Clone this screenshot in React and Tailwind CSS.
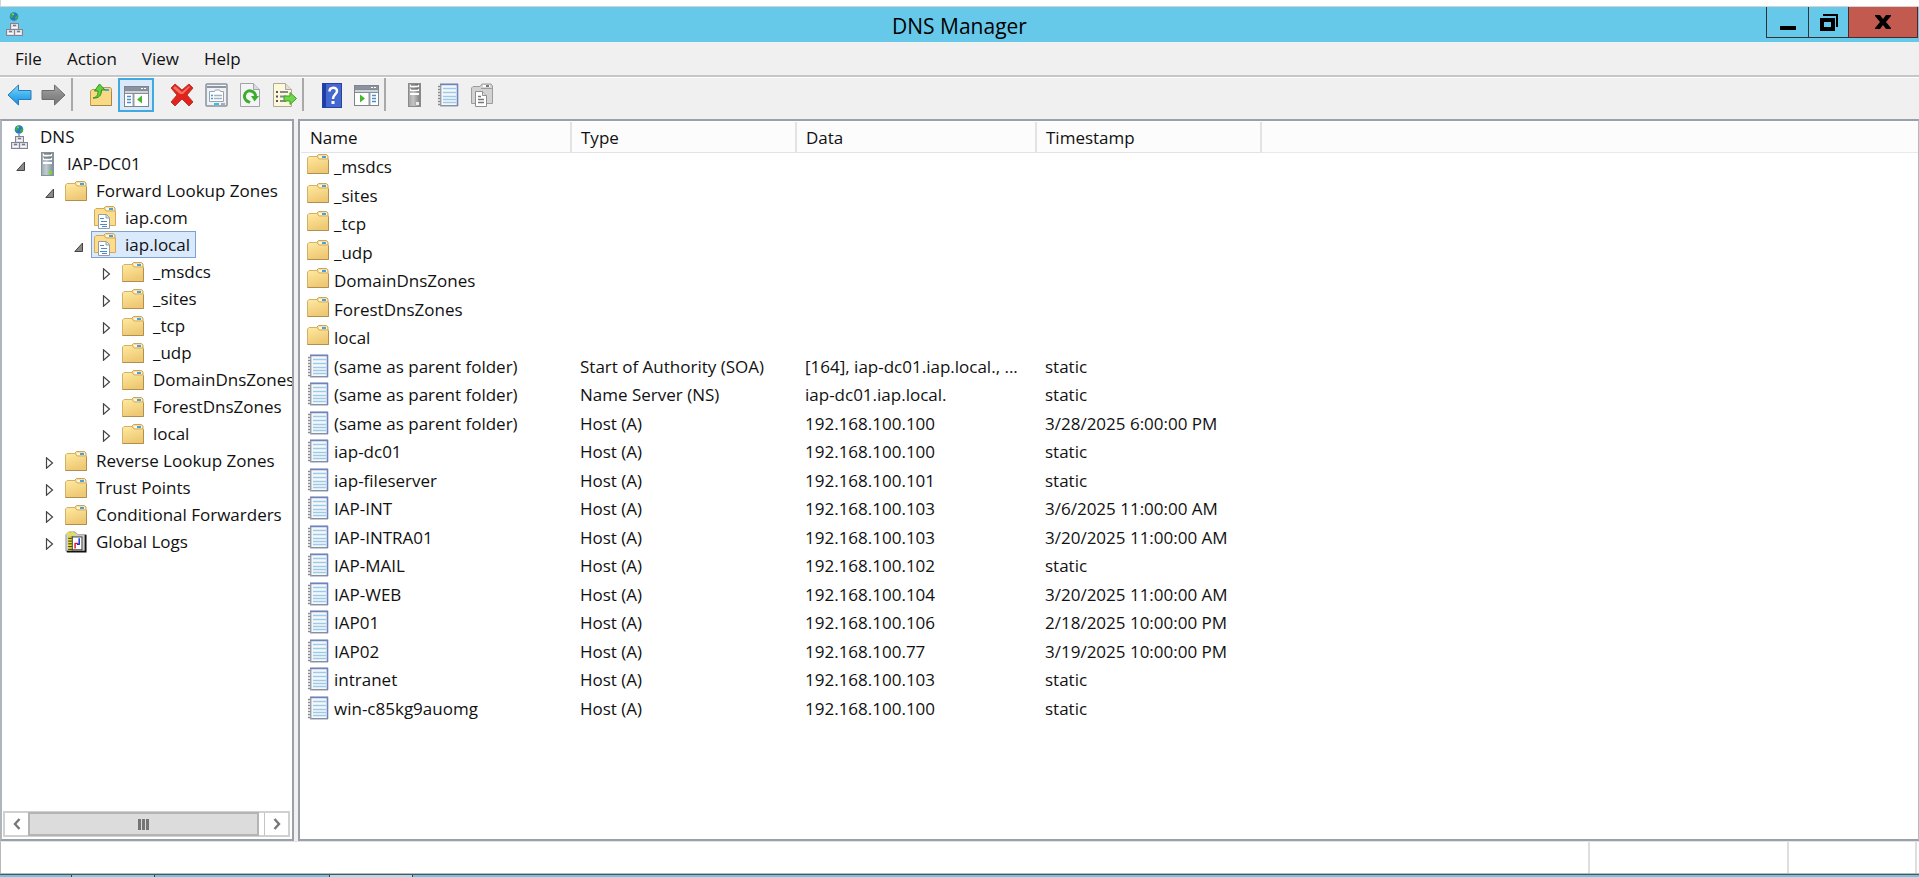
import React from 'react';

function Folder() {
  return (
    <svg width="22" height="20" viewBox="0 0 22 20" aria-hidden="true">
      <defs>
        <linearGradient id="fold" x1="0" y1="0" x2="0.4" y2="1">
          <stop offset="0" stopColor="#ffeaa0" />
          <stop offset="1" stopColor="#eec873" />
        </linearGradient>
      </defs>
      <path d="M10 4.5V2l1.500-1.500H19.500L21 2v4H10z" fill="#f6dfa0" stroke="#c9a55e" />
      <path d="M.5 19.500V4L2 2.500h8L12 5h9.500v14.500z" fill="url(#fold)" stroke="#d3b167" />
      <path d="M.5 19.500H21.500V6" fill="none" stroke="#b08f50" />
      <rect x="12" y="2" width="8" height="2" fill="#fff6d8" />
      <rect x="15" y="2" width="4" height="2" fill="#4d9fdc" />
    </svg>
  );
}

function ZoneFolder() {
  return (
    <svg width="22" height="23" viewBox="0 0 22 23" aria-hidden="true">
      <path d="M10 4.500V2l1.500-1.500H19.500L21 2v4H10z" fill="#f6dfa0" stroke="#c9a55e" />
      <path d="M.5 19.500V4L2 2.500h8L12 5h9.500v14.500z" fill="#fbdd8b" stroke="#d0ab5e" />
      <rect x="12" y="2" width="8" height="2" fill="#fff6d8" />
      <rect x="15" y="2" width="4" height="2" fill="#4d9fdc" />
      <path d="M4.500 8.500h8l3 3v11h-11z" fill="#fff" stroke="#969ca6" />
      <path d="M12 8.500v3.500h3.500" fill="#dde2ea" stroke="#969ca6" />
      <path d="M6 12.500h4M7 15.500h6M6 18.500h7M8 20.500h5" stroke="#4b86cf" strokeWidth="1.200" />
    </svg>
  );
}

function Network() {
  return (
    <svg width="18" height="24" viewBox="0 0 18 24" aria-hidden="true">
      <circle cx="8" cy="4.500" r="4.300" fill="#2679c9" />
      <path d="M4 4c1-3 3-4 4.500-3.500L8 3 6 6 4.500 5.500zM9 5l3-2c.5 2-.5 4-2.500 5z" fill="#3ead3d" />
      <path d="M6 1.500l2 .5-1 1z" fill="#bfe9ff" />
      <path d="M7 9h2v2H7z" fill="#a7abb3" />
      <g fill="#dfe1e8" stroke="#83848f">
        <rect x="4.500" y="11.500" width="8" height="6" />
        <rect x=".5" y="17.500" width="8" height="6" />
        <rect x="8.500" y="17.500" width="8" height="6" />
      </g>
      <path d="M7 13.500h3M3 19.500h3M11 19.500h3" stroke="#777984" strokeWidth="1.500" />
      <path d="M6 15.500h5M2 21.500h5M10 21.500h5" stroke="#fff" />
    </svg>
  );
}

function Server({ gray }) {
  return (
    <svg width="13" height="24" viewBox="0 0 13 24" aria-hidden="true">
      <defs>
        <linearGradient id={gray ? 'srvg' : 'srvc'} x1="0" y1="0" x2="1" y2="0">
          <stop offset="0" stopColor={gray ? '#a2a2a2' : '#9caab2'} />
          <stop offset="0.4" stopColor={gray ? '#c4c4c4' : '#c1ccd2'} />
          <stop offset="1" stopColor={gray ? '#7c7c7c' : '#7d8b94'} />
        </linearGradient>
      </defs>
      <rect x=".5" y=".5" width="12" height="23" fill={gray ? 'url(#srvg)' : 'url(#srvc)'} stroke={gray ? '#8a8a8a' : '#83929b'} />
      <path d="M2 3h9M2 7h9M2 11h9" stroke="#fff" strokeWidth="2" />
      <path d="M3 2h7M3 6h7" stroke="#454c50" />
      <rect x="8" y="19" width="3" height="3" fill={gray ? '#ededed' : '#6fe01f'} />
    </svg>
  );
}

function Notebook() {
  return (
    <svg width="22" height="24" viewBox="0 0 22 24" aria-hidden="true">
      <rect x="3.500" y="1" width="17" height="22" fill="#f4f8fc" stroke="#8f9cc4" strokeWidth="1" />
      <path d="M3 1.500h17.500V23" fill="none" stroke="#7183bd" strokeWidth="1.600" />
      <path d="M4 22.500h16" stroke="#8b9097" />
      <path d="M6 5.500h13M6 9.500h13M6 13.500h13M6 16.500h13M6 19.500h13" stroke="#9ecae4" strokeWidth="1.500" />
      <path d="M1 3.500h3M1 6.500h3M1 9.500h3M1 12.500h3M1 15.500h3M1 18.500h3M1 21.500h3" stroke="#8a8a8a" strokeWidth="1.400" />
      <path d="M4 2v21" stroke="#a2a7ae" />
    </svg>
  );
}

function Logs() {
  return (
    <svg width="24" height="24" viewBox="0 0 24 24" aria-hidden="true">
      <path d="M1 22V4l3-3h7l3 3h8v18z" fill="#cfcfcf" stroke="#9a9a9a" />
      <path d="M2 4l2-2 2 2 2-2 2 2 2-1" fill="none" stroke="#e9e524" strokeWidth="1.800" />
      <path d="M2 22.500h20.500V4" fill="none" stroke="#111" strokeWidth="2" />
      <rect x="6.500" y="6.500" width="12" height="14" fill="#fff" stroke="#333" />
      <path d="M5.500 6v15" stroke="#e6df1a" strokeWidth="4" />
      <path d="M3.500 8h4M3.500 11h4M3.500 14h4M3.500 17h4M3.500 20h4" stroke="#222" />
      <path d="M8 6v15" stroke="#333" />
      <path d="M11 13v6M11 13.500h3" stroke="#e51b1b" strokeWidth="1.600" />
      <path d="M15.500 8v7M13 14.500h3" stroke="#1c2ae0" strokeWidth="1.600" />
    </svg>
  );
}

function Arrow({ gray, flip }) {
  return (
    <svg width="25" height="22" viewBox="0 0 25 22" aria-hidden="true" className={flip ? '-scale-x-100' : ''}>
      <defs>
        <linearGradient id={gray ? 'arg' : 'arb'} x1="0" y1="0" x2="0" y2="1">
          <stop offset="0" stopColor={gray ? '#a9a9a9' : '#8cd9fb'} />
          <stop offset="0.500" stopColor={gray ? '#8a8a8a' : '#3fb2f0'} />
          <stop offset="1" stopColor={gray ? '#777' : '#1b8be0'} />
        </linearGradient>
      </defs>
      <path d="M1 11L11.500 1v5.500H24v9H11.500V21z" fill={gray ? 'url(#arg)' : 'url(#arb)'} stroke={gray ? '#6c6c6c' : '#2a79b8'} strokeLinejoin="round" />
    </svg>
  );
}

function UpFolder() {
  return (
    <svg width="22" height="24" viewBox="0 0 22 24" aria-hidden="true">
      <path d="M.5 22.500V8L2 6.500h8L12 4.500h8.500L21.500 6v16.500z" fill="#f8da86" stroke="#c19c4c" />
      <path d="M1 22.500h20.500V9" fill="none" stroke="#a98545" />
      <rect x="15" y="6" width="4" height="2" fill="#4d9fdc" />
      <path d="M3 15c4-1 5-3 5-7H4.500L9.500 1l5.500 6h-3.500c0 5-2 8.500-8.500 8z" fill="#62cf3c" stroke="#2f8f1d" />
    </svg>
  );
}

function PaneWindow({ right }) {
  return (
    <svg width="25" height="21" viewBox="0 0 25 21" aria-hidden="true">
      <rect x=".5" y=".5" width="24" height="20" fill="#fff" stroke="#7e8590" />
      <rect x="1" y="1" width="23" height="3" fill="#8a929e" />
      <path d="M17 2.500h2M20 2.500h2" stroke="#fff" />
      <rect x="1" y="5" width="23" height="2" fill="#ced3da" />
      <path d="M1 4.500h23M1 7.500h23" stroke="#858d98" />
      {right ? (
        <>
          <path d="M15.500 8v12" stroke="#969ca5" strokeWidth="2" />
          <path d="M18 10.500h4M18 13.500h4M18 16.500h4" stroke="#4a8ed0" strokeWidth="1.500" />
          <path d="M6 9.500v8l5-4z" fill="#46b62e" />
        </>
      ) : (
        <>
          <path d="M9.500 8v12" stroke="#969ca5" strokeWidth="2" />
          <path d="M3 10.500h4M3 13.500h4M3 16.500h4" stroke="#4a8ed0" strokeWidth="1.500" />
          <path d="M18 9.500v8l-5-4z" fill="#46b62e" />
        </>
      )}
    </svg>
  );
}

function Delete() {
  return (
    <svg width="24" height="24" viewBox="0 0 24 24" aria-hidden="true">
      <path d="M1 5l4-4 7 6 7-6 4 4-6 7 6 7-4 4-7-7-7 7-4-4 6-7z" fill="#e2231b" stroke="#b03a36" strokeLinejoin="round" />
      <path d="M3 5l2-2 7 6 7-6 1 1-7 7H10z" fill="#f4705f" />
    </svg>
  );
}

function Properties() {
  return (
    <svg width="23" height="24" viewBox="0 0 23 24" aria-hidden="true">
      <rect x="1" y="1" width="21" height="22" rx="1" fill="#eef1f5" stroke="#8b919b" strokeWidth="1.500" />
      <path d="M2 4h19" stroke="#8d95a2" strokeWidth="2" />
      <path d="M17 2.500h3" stroke="#fff" />
      <path d="M4.500 18.500V8.500h5l1-1.500h4l1 1.500h3v10z" fill="#fff" stroke="#9aa1ab" />
      <path d="M6 12.500h2M6 15.500h2" stroke="#3a9fe6" strokeWidth="1.500" />
      <path d="M9 12.500h8M9 15.500h8" stroke="#9fb2c7" strokeWidth="1.500" />
      <rect x="9" y="20" width="5" height="2" fill="#32c0f0" />
      <rect x="16" y="20" width="4" height="2" fill="#aab" />
    </svg>
  );
}

function Refresh() {
  return (
    <svg width="20" height="24" viewBox="0 0 20 24" aria-hidden="true">
      <path d="M.5.5h13l6 6v17H.5z" fill="#f4f4f6" stroke="#a0a3aa" />
      <path d="M13.500.5v6h6" fill="#d9dce2" stroke="#a0a3aa" />
      <path d="M8 18.500a5.500 5.500 0 1 1 7.500-5" fill="none" stroke="#3aae2a" strokeWidth="3" />
      <path d="M11 13h8l-4.500 5.500z" fill="#3aae2a" />
      <path d="M7 18l3 1.500" stroke="#3aae2a" strokeWidth="3" />
    </svg>
  );
}

function Export() {
  return (
    <svg width="25" height="24" viewBox="0 0 25 24" aria-hidden="true">
      <path d="M1.500.5h12l6 6v17h-18z" fill="#fdf7dc" stroke="#b0aa94" />
      <path d="M13.500.5v6h6" fill="#e6e1cc" stroke="#a8a8a8" />
      <path d="M4 9h2M4 13.500h2M4 18h2" stroke="#555" strokeWidth="2" />
      <path d="M8 9h8M8 13.500h6M8 18h6" stroke="#888a93" strokeWidth="2" />
      <path d="M12 13h6V9.500l6.500 6-6.500 6V18h-6z" fill="#6fd848" stroke="#3f9f26" />
    </svg>
  );
}

function HelpBook() {
  return (
    <svg width="20" height="25" viewBox="0 0 20 25" aria-hidden="true">
      <rect x=".5" y=".5" width="19" height="24" fill="#4468cf" stroke="#26439f" />
      <rect x="1" y="1" width="3" height="23" fill="#1f3da6" />
      <path d="M7.500 8.500C7.500 3.500 15 3.500 15 8c0 3.500-4 3.500-4 8" fill="none" stroke="#fff" strokeWidth="2.500" />
      <rect x="9.500" y="18" width="3" height="3" fill="#fff" />
    </svg>
  );
}

function GrayZone() {
  return (
    <svg width="22" height="24" viewBox="0 0 22 24" aria-hidden="true">
      <path d="M.5 20.500V5L2 3.500h7L11 1h9l1.500 2v17.500z" fill="#d2d2d2" stroke="#9d9d9d" />
      <path d="M10 5.500h11" stroke="#9d9d9d" />
      <rect x="12" y="2" width="7" height="2" fill="#fff" />
      <path d="M15 3h3" stroke="#777" strokeWidth="2" />
      <path d="M4.500 8.500h7l4 4v11h-11z" fill="#fff" stroke="#8f8f8f" />
      <path d="M11.500 8.500v4h4" fill="#ddd" stroke="#8f8f8f" />
      <path d="M7 13.500h3M7 16.500h6M7 19.500h6" stroke="#777" strokeWidth="1.500" />
    </svg>
  );
}

function ToolButton({ label, active, children }) {
  return (
    <button
      type="button"
      aria-label={label}
      className={
        active
          ? 'flex h-[34px] w-[36px] items-center justify-center border-2 border-[#3fa9e0] bg-[#d9e9fa] pt-[3px]'
          : 'flex h-[34px] w-[34px] items-center justify-center'
      }
    >
      {children}
    </button>
  );
}

function Separator() {
  return <div className="mr-[11px] ml-px h-[33px] w-[2px] bg-[#a9a9a9]" />;
}

const tree = [
  { level: 0, text: 'DNS', icon: Network },
  { level: 1, text: 'IAP-DC01', icon: Server, state: 'open' },
  { level: 2, text: 'Forward Lookup Zones', icon: Folder, state: 'open' },
  { level: 3, text: 'iap.com', icon: ZoneFolder },
  { level: 3, text: 'iap.local', icon: ZoneFolder, state: 'open', selected: true },
  { level: 4, text: '_msdcs', icon: Folder, state: 'closed' },
  { level: 4, text: '_sites', icon: Folder, state: 'closed' },
  { level: 4, text: '_tcp', icon: Folder, state: 'closed' },
  { level: 4, text: '_udp', icon: Folder, state: 'closed' },
  { level: 4, text: 'DomainDnsZones', icon: Folder, state: 'closed' },
  { level: 4, text: 'ForestDnsZones', icon: Folder, state: 'closed' },
  { level: 4, text: 'local', icon: Folder, state: 'closed' },
  { level: 2, text: 'Reverse Lookup Zones', icon: Folder, state: 'closed' },
  { level: 2, text: 'Trust Points', icon: Folder, state: 'closed' },
  { level: 2, text: 'Conditional Forwarders', icon: Folder, state: 'closed' },
  { level: 2, text: 'Global Logs', icon: Logs, state: 'closed' },
];

const indents = ['', 'pl-[8px]', 'pl-[37px]', 'pl-[66px]', 'pl-[94px]'];

function Expander({ state }) {
  return (
    <svg width="10" height="12" viewBox="0 0 10 12" aria-hidden="true" className="mt-1">
      {state === 'open' ? (
        <path d="M8.500 2v8.500H.8z" fill="#8a8a8a" stroke="#444" />
      ) : (
        <path d="M1.500.8v10.400L7.500 6z" fill="#fff" stroke="#444" strokeWidth="1.200" />
      )}
    </svg>
  );
}

function TreeRow({ level, text, icon: Icon, state, selected }) {
  return (
    <li className={`flex h-[27px] items-center whitespace-nowrap ${indents[level]}`}>
      {level > 0 && (
        <span className="mr-[2px] flex w-[21px] shrink-0 justify-center">{state && <Expander state={state} />}</span>
      )}
      <button
        type="button"
        className={`flex h-[27px] shrink-0 items-center border pr-[5px] pl-[2px] ${
          level === 0 ? 'ml-[4px]' : ''
        } ${selected ? 'border-[#7da2ce] bg-[#dbe9fc]' : 'border-transparent'}`}
      >
        <span className="flex w-[22px] shrink-0 justify-center">
          <Icon />
        </span>
        <span className="ml-[9px]">{text}</span>
      </button>
    </li>
  );
}

const same = '(same as parent folder)';
const rows = [
  ['_msdcs'],
  ['_sites'],
  ['_tcp'],
  ['_udp'],
  ['DomainDnsZones'],
  ['ForestDnsZones'],
  ['local'],
  [same, 'Start of Authority (SOA)', '[164], iap-dc01.iap.local., ...', 'static'],
  [same, 'Name Server (NS)', 'iap-dc01.iap.local.', 'static'],
  [same, 'Host (A)', '192.168.100.100', '3/28/2025 6:00:00 PM'],
  ['iap-dc01', 'Host (A)', '192.168.100.100', 'static'],
  ['iap-fileserver', 'Host (A)', '192.168.100.101', 'static'],
  ['IAP-INT', 'Host (A)', '192.168.100.103', '3/6/2025 11:00:00 AM'],
  ['IAP-INTRA01', 'Host (A)', '192.168.100.103', '3/20/2025 11:00:00 AM'],
  ['IAP-MAIL', 'Host (A)', '192.168.100.102', 'static'],
  ['IAP-WEB', 'Host (A)', '192.168.100.104', '3/20/2025 11:00:00 AM'],
  ['IAP01', 'Host (A)', '192.168.100.106', '2/18/2025 10:00:00 PM'],
  ['IAP02', 'Host (A)', '192.168.100.77', '3/19/2025 10:00:00 PM'],
  ['intranet', 'Host (A)', '192.168.100.103', 'static'],
  ['win-c85kg9auomg', 'Host (A)', '192.168.100.100', 'static'],
];

function Records() {
  return (
    <table className="w-full table-fixed border-collapse text-left whitespace-nowrap">
      <colgroup>
        <col className="w-[270px]" />
        <col className="w-[225px]" />
        <col className="w-[240px]" />
        <col className="w-[225px]" />
        <col />
      </colgroup>
      <thead>
        <tr className="h-[30px] bg-[#fcfcfc]">
          {['Name', 'Type', 'Data', 'Timestamp'].map((h) => (
            <th key={h} scope="col" className="border-r-2 border-b border-[#e3e3e3] p-0 pt-[2px] pl-[9px] font-normal">
              {h}
            </th>
          ))}
          <td className="border-b border-[#e9e9e9] p-0" />
        </tr>
      </thead>
      <tbody>
        {rows.map(([name, type, data, stamp], i) => (
          <tr key={i} className="odd:h-[28px] even:h-[29px]">
            <td className="p-0 pl-[6px]">
              <span className="flex items-center">
                <span className="mr-[5px] flex h-[24px] w-[22px] shrink-0 items-start">
                  {type ? <Notebook /> : <Folder />}
                </span>
                <span className="pt-[2px]">{name}</span>
              </span>
            </td>
            <td className="p-0 pt-[2px] pl-[9px]">{type}</td>
            <td className="p-0 pt-[2px] pl-[9px]">{data}</td>
            <td className="p-0 pt-[2px] pl-[9px]">{stamp}</td>
            <td />
          </tr>
        ))}
      </tbody>
    </table>
  );
}

function Scrollbar() {
  return (
    <div className="mr-[2px] mb-[2px] ml-px flex h-[26px] shrink-0 border-2 border-[#d0d0d0] bg-white">
      <button type="button" aria-label="Scroll left" className="flex w-[23px] items-center justify-center">
        <svg width="8" height="12" viewBox="0 0 8 12" aria-hidden="true"><path d="M6.500 1L2 6l4.500 5" fill="none" stroke="#777" strokeWidth="2.400" /></svg>
      </button>
      <div className="-my-px flex flex-1 items-center justify-center gap-px border-2 border-[#b4b4b4] bg-[#dcdcdc]">
        <i className="h-[11px] w-[3px] bg-[#757575]" />
        <i className="h-[11px] w-[3px] bg-[#757575]" />
        <i className="h-[11px] w-[3px] bg-[#757575]" />
      </div>
      <button type="button" aria-label="Scroll right" className="ml-[5px] flex w-[24px] items-center justify-center border-l border-[#c4c4c4]">
        <svg width="8" height="12" viewBox="0 0 8 12" aria-hidden="true"><path d="M1.500 1L6 6l-4.500 5" fill="none" stroke="#777" strokeWidth="2.400" /></svg>
      </button>
    </div>
  );
}

export default function App() {
  return (
    <div className="flex h-screen flex-col overflow-hidden bg-[#f0f0f0] font-['Open_Sans','Noto_Sans',sans-serif] text-[17px] leading-[24px] text-[#111]">
      <div className="h-[7px] shrink-0 border-b border-l border-b-[#d4d4d4] border-l-[#d4d4d4] bg-white" />
      <header className="grid h-[35px] shrink-0 grid-cols-[1fr_auto_1fr] bg-[#66c9ea]">
        <div className="pt-[5px] pl-[6px]">
          <Network />
        </div>
        <h1 className="self-center pt-[2px] text-[21px] leading-[28px] text-black">DNS Manager</h1>
        <div className="mr-px flex h-[31px] justify-end">
          <button type="button" aria-label="Minimize" className="flex w-[43px] items-center justify-center border border-t-0 border-[#333]">
            <svg width="18" height="18" viewBox="0 0 18 18" aria-hidden="true"><path d="M1 15h16" stroke="#000" strokeWidth="4" /></svg>
          </button>
          <button type="button" aria-label="Restore" className="flex w-[39px] items-center justify-center border-b border-[#333]">
            <svg width="18" height="17" viewBox="0 0 18 17" aria-hidden="true">
              <path d="M2 6h11v9H2z" fill="none" stroke="#000" strokeWidth="4" />
              <path d="M3 1h14v12" fill="none" stroke="#000" strokeWidth="2" />
            </svg>
          </button>
          <button type="button" aria-label="Close" className="flex w-[70px] items-center justify-center border border-t-0 border-[#4a2a2a] bg-[#c35a4f]">
            <svg width="16" height="14" viewBox="0 0 16 14" aria-hidden="true"><path d="M0 0h5l3 4 3-4h5v1l-5 6 5 6v1h-5l-3-4-3 4H0v-1l5-6-5-6z" fill="#000" /></svg>
          </button>
        </div>
      </header>

      <nav className="flex h-[35px] shrink-0 items-center gap-[25px] border-b-2 border-[#c6c6c8] pl-[15px]">
        {['File', 'Action', 'View', 'Help'].map((m) => (
          <button key={m} type="button">{m}</button>
        ))}
      </nav>

      <div className="flex h-[42px] shrink-0 items-start border-t border-white pl-[2px]">
        <ToolButton label="Back"><Arrow /></ToolButton>
        <ToolButton label="Forward"><Arrow gray flip /></ToolButton>
        <Separator />
        <ToolButton label="Up one level"><UpFolder /></ToolButton>
        <ToolButton label="Show console tree" active><PaneWindow /></ToolButton>
        <div className="w-[11px]" />
        <ToolButton label="Delete"><Delete /></ToolButton>
        <ToolButton label="Properties"><Properties /></ToolButton>
        <ToolButton label="Refresh"><Refresh /></ToolButton>
        <ToolButton label="Export list"><Export /></ToolButton>
        <Separator />
        <ToolButton label="Help"><HelpBook /></ToolButton>
        <ToolButton label="Show action pane"><PaneWindow right /></ToolButton>
        <Separator />
        <ToolButton label="New server"><Server gray /></ToolButton>
        <ToolButton label="New record"><Notebook /></ToolButton>
        <ToolButton label="New zone"><GrayZone /></ToolButton>
      </div>

      <main className="flex min-h-0 flex-1 gap-[4px]">
        <aside className="flex w-[294px] shrink-0 flex-col border-2 border-[#9a9fa8] border-l-[#b0b4bb] bg-white">
          <ul className="min-h-0 flex-1 overflow-hidden pt-[2px]">
            {tree.map((n, i) => (
              <TreeRow key={i} {...n} />
            ))}
          </ul>
          <Scrollbar />
        </aside>
        <section className="min-w-0 flex-1 overflow-hidden border-2 border-r border-[#9a9fa8] border-r-[#b8b8c0] bg-white pt-px pl-px">
          <Records />
        </section>
      </main>

      <footer className="flex h-[33px] shrink-0 border-t border-b border-l border-t-[#e4e4e4] border-b-[#b8b8b8] border-l-[#b8b8b8] bg-white">
        <div className="flex-1 border-r-2 border-[#dedede]" />
        <div className="w-[199px] border-r-2 border-[#dedede]" />
        <div className="mr-[2px] w-[128px] border-r-2 border-[#dedede]" />
      </footer>
      <div className="flex h-[3px] shrink-0 border-t border-[#555] bg-[#66c9ea]">
        <div className="ml-[71px] w-[84px] border-x border-[#345] bg-[#79cfec]" />
        <div className="ml-[174px] w-[84px] border-x border-[#345] bg-[#a5dff2]" />
      </div>
    </div>
  );
}
